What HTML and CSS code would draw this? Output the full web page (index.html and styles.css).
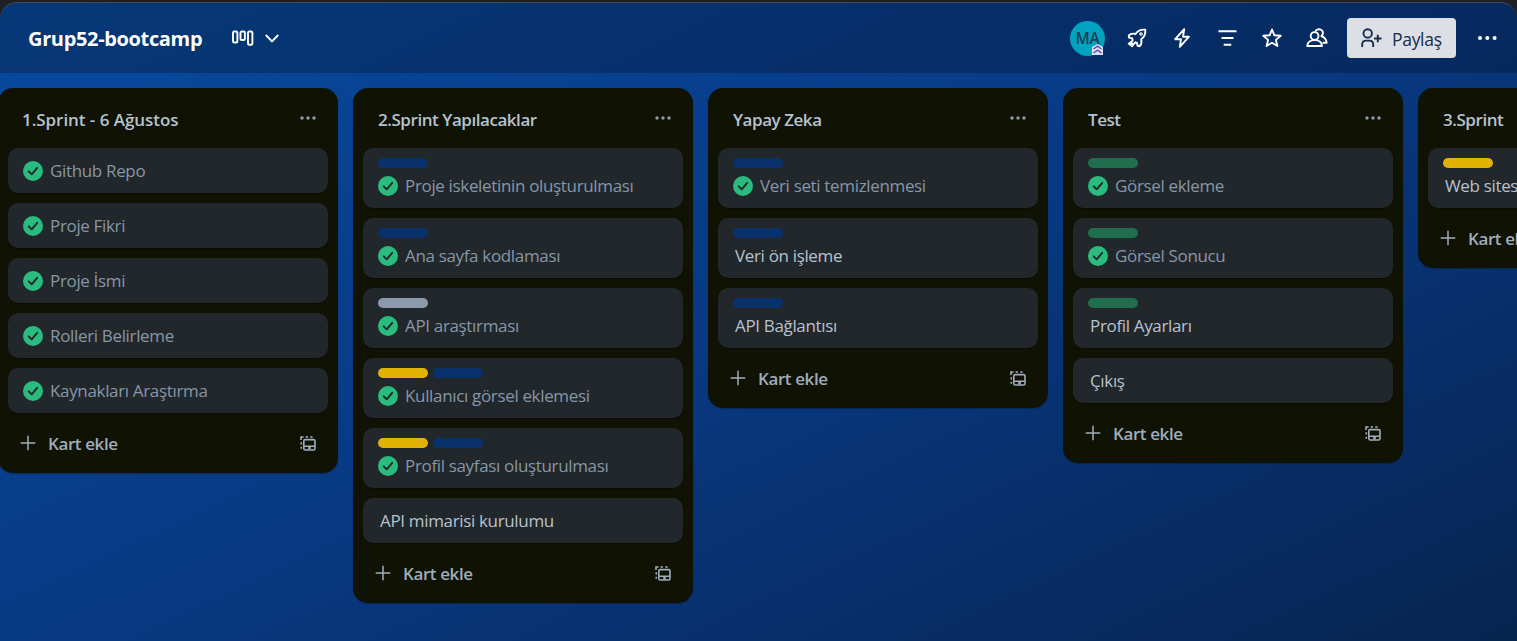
FILE: index.html
```html
<!DOCTYPE html>
<html lang="tr">
<head>
<meta charset="utf-8">
<title>Grup52-bootcamp</title>
<link rel="stylesheet" href="styles.css">
</head>
<body>
<svg class="sprite" aria-hidden="true">
  <symbol id="dots" viewBox="0 0 20 20"><circle cx="3" cy="10" r="2"/><circle cx="10.3" cy="10" r="2"/><circle cx="17.6" cy="10" r="2"/></symbol>
  <symbol id="more" viewBox="0 0 16 6"><circle cx="2" cy="3" r="1.7"/><circle cx="8" cy="3" r="1.7"/><circle cx="14" cy="3" r="1.7"/></symbol>
  <symbol id="check" viewBox="0 0 20 20"><circle cx="10" cy="10" r="10" fill="#2abb7f"/><path d="M5.7 10.3 8.7 13.3 14.2 6.8" fill="none" stroke="#22272b" stroke-width="1.9" stroke-linecap="round" stroke-linejoin="round"/></symbol>
  <symbol id="plus" viewBox="0 0 16 16"><path d="M8 .7v14.6M.7 8h14.6" fill="none" stroke="currentColor" stroke-width="1.5"/></symbol>
  <symbol id="template" viewBox="0 0 16 15"><path d="M1.3 12.8V10.8M1.3 8.6V6.2M1 4V1H3.6M5.6 1H8M10.2 1H12.6" fill="none" stroke="currentColor" stroke-width="1.6"/><rect x="3.8" y="3.6" width="11.2" height="10.4" rx="1.4" fill="none" stroke="currentColor" stroke-width="1.6"/><path d="M4 9.6h11v1.5H4zM8.2 10h2.6v3.5H8.2z" fill="currentColor"/></symbol>
</svg>
<div class="board">
  <header class="bar">
    <h1 class="board-name">Grup52-bootcamp</h1>
    <div class="view">
      <svg width="22" height="16" viewBox="0 0 22 16" class="line"><rect x="1" y="1.5" width="4.4" height="11" rx="1.3"/><rect x="8.5" y="1.5" width="4.4" height="8.5" rx="1.3"/><rect x="16" y="1.5" width="4.4" height="13.3" rx="1.3"/></svg>
      <svg width="14" height="9" viewBox="0 0 14 9" class="line"><path d="M.8 1 7 7.4 13.2 1"/></svg>
    </div>
    <div class="tools">
      <div class="avatar">MA<svg class="rank" width="11" height="11" viewBox="0 0 11 11"><path d="M0 3 5.5 0 11 3v8H0z" fill="#dfe1f5"/><path d="M1.5 5 5.5 2.2 9.5 5M1.5 9 5.5 6.2 9.5 9" fill="none" stroke="#5e4db2" stroke-width="1.5"/></svg></div>
      <svg width="20" height="20" viewBox="0 0 20 20" class="line rocket"><path d="M5.8 12.3 5 10.2 2 9.6 1.8 7.4C3.6 5.6 6 5.2 8.6 6 10.6 2.6 13.4 1.3 18.3 1.7 18.7 6 17.6 9 14.2 11.2 14.9 14 14.4 16.4 12.8 18.2L10.6 17.8 10 15 7.8 14.2"/><circle class="port" cx="14" cy="6" r="1.2"/><path d="M6.2 12.2 1.2 16.3M8.2 14.4 4.4 18.8M5.6 14.6 2.7 17.6"/></svg>
      <svg width="16" height="20" viewBox="0 0 16 20" class="line bolt"><path d="M10.2 1.1 1.2 11.2H7L5.8 18.9 14.8 8.8H9L10.2 1.1Z"/></svg>
      <svg width="19" height="16" viewBox="0 0 19 16" class="line filter"><path d="M.5 1.3h18M3.5 8h12M5.7 14.7h7.6"/></svg>
      <svg width="20" height="20" viewBox="0 0 20 20" class="line star"><path d="M10 1.5 12.4 7.3 18.7 7.8 13.9 11.9 15.4 18 10 14.7 4.6 18 6.1 11.9 1.3 7.8 7.6 7.3Z"/></svg>
      <svg width="22" height="20" viewBox="0 0 22 20" class="line people"><circle cx="8.6" cy="8" r="3.9"/><path d="M1.2 18C1.5 14 4.3 12.1 8.7 12.1S15.7 14 16 18ZM9.2 3.6C10.3.8 15 .2 16.5 3.2 17.3 5 16.6 7 15.4 8.2 18.7 9.3 20.3 11.4 20.7 14.8H16.5"/></svg>
      <button class="share"><svg width="21" height="20" viewBox="0 0 21 20" class="line"><circle cx="6.7" cy="5.4" r="4.2"/><path d="M1.2 19V16.5C1.2 13.9 2.9 12.6 5 12.6H8.4C10.5 12.6 12.2 13.9 12.2 16.5V19M16.8 6.8v7.4M13.1 10.5h7.4"/></svg><span>Paylaş</span></button>
      <svg class="menu" width="20" height="20"><use href="#dots"/></svg>
    </div>
  </header>

  <main class="lists">
    <section class="list">
      <div class="head"><h2 class="wide">1.Sprint - 6 Ağustos</h2><svg class="more"><use href="#more"/></svg></div>
      <ul class="cards">
        <li class="card done"><p><svg class="tick"><use href="#check"/></svg>Github Repo</p></li>
        <li class="card done"><p><svg class="tick"><use href="#check"/></svg>Proje Fikri</p></li>
        <li class="card done"><p><svg class="tick"><use href="#check"/></svg>Proje İsmi</p></li>
        <li class="card done"><p><svg class="tick"><use href="#check"/></svg>Rolleri Belirleme</p></li>
        <li class="card done"><p><svg class="tick"><use href="#check"/></svg>Kaynakları Araştırma</p></li>
      </ul>
      <div class="foot"><svg class="plus"><use href="#plus"/></svg><span>Kart ekle</span><svg class="template"><use href="#template"/></svg></div>
    </section>

    <section class="list">
      <div class="head"><h2>2.Sprint Yapılacaklar</h2><svg class="more"><use href="#more"/></svg></div>
      <ul class="cards">
        <li class="card done"><div class="labels"><i class="blue"></i></div><p><svg class="tick"><use href="#check"/></svg>Proje iskeletinin oluşturulması</p></li>
        <li class="card done"><div class="labels"><i class="blue"></i></div><p><svg class="tick"><use href="#check"/></svg>Ana sayfa kodlaması</p></li>
        <li class="card done"><div class="labels"><i class="gray"></i></div><p><svg class="tick"><use href="#check"/></svg>API araştırması</p></li>
        <li class="card done"><div class="labels"><i class="yellow"></i><i class="blue"></i></div><p><svg class="tick"><use href="#check"/></svg>Kullanıcı görsel eklemesi</p></li>
        <li class="card done"><div class="labels"><i class="yellow"></i><i class="blue"></i></div><p><svg class="tick"><use href="#check"/></svg>Profil sayfası oluşturulması</p></li>
        <li class="card"><p>API mimarisi kurulumu</p></li>
      </ul>
      <div class="foot"><svg class="plus"><use href="#plus"/></svg><span>Kart ekle</span><svg class="template"><use href="#template"/></svg></div>
    </section>

    <section class="list">
      <div class="head"><h2>Yapay Zeka</h2><svg class="more"><use href="#more"/></svg></div>
      <ul class="cards">
        <li class="card done"><div class="labels"><i class="blue"></i></div><p><svg class="tick"><use href="#check"/></svg>Veri seti temizlenmesi</p></li>
        <li class="card"><div class="labels"><i class="blue"></i></div><p>Veri ön işleme</p></li>
        <li class="card"><div class="labels"><i class="blue"></i></div><p>API Bağlantısı</p></li>
      </ul>
      <div class="foot"><svg class="plus"><use href="#plus"/></svg><span>Kart ekle</span><svg class="template"><use href="#template"/></svg></div>
    </section>

    <section class="list">
      <div class="head"><h2>Test</h2><svg class="more"><use href="#more"/></svg></div>
      <ul class="cards">
        <li class="card done"><div class="labels"><i class="green"></i></div><p><svg class="tick"><use href="#check"/></svg>Görsel ekleme</p></li>
        <li class="card done"><div class="labels"><i class="green"></i></div><p><svg class="tick"><use href="#check"/></svg>Görsel Sonucu</p></li>
        <li class="card"><div class="labels"><i class="green"></i></div><p>Profil Ayarları</p></li>
        <li class="card"><p>Çıkış</p></li>
      </ul>
      <div class="foot"><svg class="plus"><use href="#plus"/></svg><span>Kart ekle</span><svg class="template"><use href="#template"/></svg></div>
    </section>

    <section class="list">
      <div class="head"><h2>3.Sprint</h2><svg class="more"><use href="#more"/></svg></div>
      <ul class="cards">
        <li class="card"><div class="labels"><i class="yellow"></i></div><p>Web sitesi</p></li>
      </ul>
      <div class="foot"><svg class="plus"><use href="#plus"/></svg><span>Kart ekle</span><svg class="template"><use href="#template"/></svg></div>
    </section>
  </main>
</div>
</body>
</html>
```
FILE: styles.css
```css
* { box-sizing: border-box; }
body {
  margin: 0;
  height: 641px;
  padding-top: 2px;
  overflow: hidden;
  background: #1d2125;
  font: 17px/25px "Open Sans", "Noto Sans", sans-serif;
  letter-spacing: -0.34px;
}
h1, h2, p, ul { margin: 0; padding: 0; }
svg { flex: none; display: block; }
.sprite { position: absolute; width: 0; height: 0; }
.line { fill: none; stroke: currentColor; stroke-width: 1.9; stroke-linejoin: round; }

.board {
  height: 639px;
  overflow: hidden;
  border-top: 1px solid #45494d;
  border-radius: 17px 17px 0 0;
  background: linear-gradient(155deg, #084a9f 0%, #083982 50%, #072450 100%);
}
.bar {
  display: flex;
  align-items: center;
  height: 70px;
  padding: 0 20px 0 28px;
  background: rgba(0, 0, 0, .24);
  color: #fff;
}
.board-name { padding-top: 2px; font-size: 20px; line-height: 30px; font-weight: 700; letter-spacing: -0.35px; }
.view { display: flex; align-items: center; gap: 11px; margin-left: 30px; }
.tools { display: flex; align-items: center; margin-left: auto; }
.avatar {
  position: relative;
  width: 35px;
  height: 35px;
  margin-right: 22px;
  border-radius: 50%;
  background: #00a3bf;
  color: #1d3b55;
  font-size: 15.5px;
  font-weight: 600;
  line-height: 35px;
  text-align: center;
}
.rank { position: absolute; right: 2px; bottom: 1px; }
.rocket { margin-right: 27px; }
.port { stroke-width: 1.2; }
.bolt { margin-right: 28px; }
.filter { margin-right: 25px; }
.star { margin-right: 24px; }
.people { margin-right: 19px; }
.share {
  display: flex;
  align-items: center;
  gap: 10px;
  width: 109px;
  height: 40px;
  margin-right: 21px;
  padding: 0 0 0 14px;
  border: 0;
  border-radius: 4px;
  background: #dcdfe4;
  color: #172b4d;
  font: 500 17.5px/25px "Open Sans", sans-serif;
  letter-spacing: -0.3px;
}
.share span { padding-top: 3px; }
.menu { fill: #fff; }

.lists { display: flex; align-items: flex-start; gap: 15px; margin-left: -2px; padding-top: 15px; }
.list {
  flex: 0 0 340px;
  padding: 0 10px;
  border-radius: 15px;
  background: #101204;
  color: #b6c2cf;
  box-shadow: 0 1px 1px rgba(9, 20, 40, .4);
}
.head { display: flex; justify-content: space-between; height: 60px; padding: 19px 12px 0 15px; }
.head h2 { font-size: 17px; line-height: 25px; font-weight: 600; letter-spacing: -0.45px; }
.head .wide { margin-left: -1px; letter-spacing: -0.05px; }
.more { width: 16px; height: 6px; margin-top: 8px; fill: #8c9bab; }
.cards { display: flex; flex-direction: column; gap: 10px; list-style: none; }
.card {
  padding: 10px 15px;
  border-radius: 10px;
  background: #22272b;
  box-shadow: 0 1px 1px rgba(0, 0, 0, .35);
}
.card p { display: flex; align-items: center; gap: 7px; height: 25px; padding-left: 2px; white-space: nowrap; }
.done p { padding-left: 0; color: #8696a7; }
.tick { width: 20px; height: 20px; }
.labels { display: flex; gap: 5px; height: 15px; }
.labels i { width: 50px; height: 10px; border-radius: 5px; }
.blue { background: #09326c; }
.gray { background: #8c9bab; }
.yellow { background: #e2b203; }
.green { background: #216e4e; }
.foot { display: flex; align-items: center; height: 60px; padding: 0 12px; color: #9fadbc; font-weight: 600; letter-spacing: -0.4px; }
.foot span { padding-top: 1px; }
.plus { width: 16px; height: 16px; margin-right: 12px; }
.template { width: 16px; height: 15px; margin-left: auto; }
```
